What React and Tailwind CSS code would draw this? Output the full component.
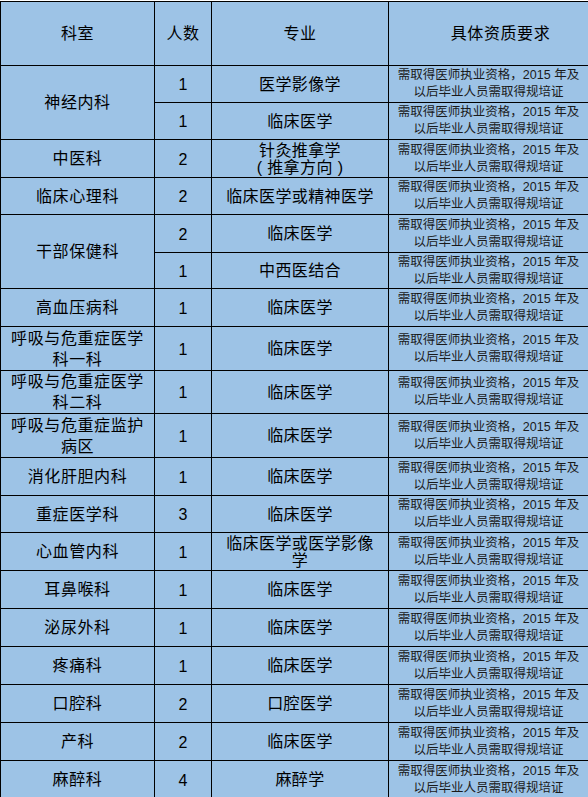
import React from 'react';

const REQ = ['需取得医师执业资格，2015 年及', '以后毕业人员需取得规培证'];

// each row: dept (null when covered by a row-span above), span, count, major
const rows = [
  { dept: ['神经内科'], span: 2, count: '1', major: ['医学影像学'] },
  { dept: null, count: '1', major: ['临床医学'] },
  { dept: ['中医科'], count: '2', major: ['针灸推拿学', '( 推拿方向 )'] },
  { dept: ['临床心理科'], count: '2', major: ['临床医学或精神医学'] },
  { dept: ['干部保健科'], span: 2, count: '2', major: ['临床医学'] },
  { dept: null, count: '1', major: ['中西医结合'] },
  { dept: ['高血压病科'], count: '1', major: ['临床医学'] },
  { dept: ['呼吸与危重症医学', '科一科'], count: '1', major: ['临床医学'] },
  { dept: ['呼吸与危重症医学', '科二科'], count: '1', major: ['临床医学'] },
  { dept: ['呼吸与危重症监护', '病区'], count: '1', major: ['临床医学'] },
  { dept: ['消化肝胆内科'], count: '1', major: ['临床医学'] },
  { dept: ['重症医学科'], count: '3', major: ['临床医学'] },
  { dept: ['心血管内科'], count: '1', major: ['临床医学或医学影像', '学'] },
  { dept: ['耳鼻喉科'], count: '1', major: ['临床医学'] },
  { dept: ['泌尿外科'], count: '1', major: ['临床医学'] },
  { dept: ['疼痛科'], count: '1', major: ['临床医学'] },
  { dept: ['口腔科'], count: '2', major: ['口腔医学'] },
  { dept: ['产科'], count: '2', major: ['临床医学'] },
  { dept: ['麻醉科'], count: '4', major: ['麻醉学'] },
];

const cell = 'border-r border-b border-black flex flex-col items-center justify-center text-center';

const Lines = ({ lines, lead }) => (
  <>
    {lines.map((l) => (
      <span key={l} className={`block whitespace-pre ${lead}`}>{l}</span>
    ))}
  </>
);

export default function App() {
  return (
    <div className="w-[588px] h-[797px] overflow-hidden bg-white pt-px font-['Liberation_Sans','Noto_Sans_CJK_SC',sans-serif] text-black">
      <div className="w-[590px] grid grid-cols-[154px_57px_177px_200px] grid-rows-[64px_37px_37px_38px_37px_38px_36px_38px_44px_43px_44px_38px_37px_38px_38px_38px_38px_38px_38px_38px] border-l border-t border-black bg-[#9dc3e6]">
        {/* Header */}
        <div className={`${cell} text-[16px] tracking-[0.6px]`}>科室</div>
        <div className={`${cell} text-[16px] tracking-[0.6px]`}>人数</div>
        <div className={`${cell} text-[16px] tracking-[0.6px]`}>专业</div>
        <div className={`${cell} text-[16px] tracking-[0.6px] pl-6`}>具体资质要求</div>

        {rows.map((r, i) => (
          <React.Fragment key={i}>
            {r.dept && (
              <div className={`${cell} text-[16px] tracking-[0.6px] ${r.span === 2 ? 'row-span-2' : ''}`}>
                <Lines lines={r.dept} lead="leading-[21px]" />
              </div>
            )}
            <div className={`${cell} col-start-2 text-[16px] pt-0.5`}>{r.count}</div>
            <div className={`${cell} text-[16px] tracking-[0.4px]`}>
              <Lines lines={r.major} lead="leading-[17px]" />
            </div>
            <div className={`${cell} text-[12.5px] text-[#1a1a1a]`}>
              <Lines lines={REQ} lead="leading-[17px]" />
            </div>
          </React.Fragment>
        ))}
      </div>
    </div>
  );
}
